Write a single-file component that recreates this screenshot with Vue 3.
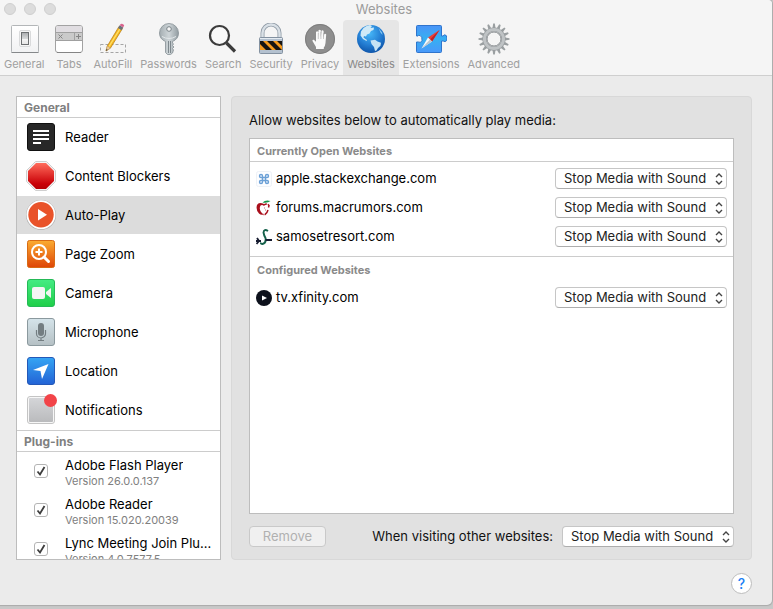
<template>
  <div class="desktop">
    <main class="window">
      <header class="titlebar">
        <div class="title-row">
          <div class="lights">
            <span v-for="n in 3" :key="n" class="light"></span>
          </div>
          <h1 class="title">Websites</h1>
        </div>

        <nav class="toolbar">
          <button
            v-for="tab in tabs"
            :key="tab"
            type="button"
            class="tab"
            :class="{ active: tab === activeTab }"
            @click="activeTab = tab"
          >
            <svg class="tab-icon" width="32" height="32" viewBox="0 0 32 32">
              <g v-if="tab === 'General'">
                <defs>
                  <linearGradient id="plate" x1="0" y1="0" x2="0" y2="1">
                    <stop offset="0" stop-color="#ffffff" />
                    <stop offset="1" stop-color="#f1f2f3" />
                  </linearGradient>
                  <linearGradient id="switch" x1="0" y1="0" x2="0" y2="1">
                    <stop offset="0" stop-color="#a8abad" />
                    <stop offset="0.5" stop-color="#d5d7d8" />
                    <stop offset="0.55" stop-color="#f5f5f5" />
                    <stop offset="1" stop-color="#e4e4e4" />
                  </linearGradient>
                </defs>
                <rect x="3.5" y="2.5" width="27" height="27" rx="1" fill="url(#plate)" stroke="#b3b6b8" />
                <path d="M3.5 29.5h27" stroke="#85888a" />
                <rect x="11.5" y="7.5" width="11" height="16" rx="1.5" fill="#f6f6f6" stroke="#d9dadb" />
                <rect x="13.5" y="9.5" width="7" height="12" fill="url(#switch)" stroke="#6d7072" />
              </g>
              <g v-else-if="tab === 'Tabs'">
                <rect x="2.5" y="2.5" width="27" height="27" rx="2.5" fill="#fff" stroke="#a2a2a2" />
                <path d="M3 9V5q0-2 2-2h22q2 0 2 2v4z" fill="#e0dde1" />
                <path d="M3 9h26v8H3z" fill="#cacaca" />
                <path d="M3 9.5h26M3 17.5h26M21.5 9v8" stroke="#a0a0a0" fill="none" />
                <path d="M5.5 11.5l4 4m0-4l-4 4M25.5 11v5M23 13.5h5" stroke="#858585" fill="none" />
                <path d="M4 29.5h24" stroke="#858585" />
              </g>
              <g v-else-if="tab === 'AutoFill'">
                <rect x="3.5" y="21.5" width="25" height="8" fill="none" stroke="#a5a5a5" stroke-dasharray="3 2" />
                <path d="M9 28l1.3-5L22 3.5l3.5 2L13.5 25z" fill="#f5b81e" stroke="#b57913" stroke-width="0.7" />
                <path d="M12 23.5L23.5 5" stroke="#ffe06b" stroke-width="1.3" />
                <path d="M9 28l1.3-5 3.2 2z" fill="#edcf9c" stroke="#b79463" stroke-width="0.5" />
                <path d="M9 28l.5-2 1.2.7z" fill="#333" />
                <path d="M21 5l1.7-2.7 3.5 2.2-1.7 2.7z" fill="#69727b" />
                <path d="M22.7 2.3l1-1.3q2-1 3.5 1.2l-1 2.3z" fill="#d9648e" />
              </g>
              <g v-else-if="tab === 'Passwords'">
                <defs>
                  <linearGradient id="key" x1="0" y1="0" x2="1" y2="0">
                    <stop offset="0" stop-color="#a4adb1" />
                    <stop offset="0.5" stop-color="#ced5d8" />
                    <stop offset="1" stop-color="#929ca1" />
                  </linearGradient>
                </defs>
                <path d="M12.5 18.5Q6.5 16 6.5 10a9.5 9.5 0 0 1 19 0q0 6-6 8.500V20l1 1-1 1.5 1.5 1.5-1.5 1.5 1 1.5-1 3-2 1.5h-3l-2-2z" fill="url(#key)" stroke="#858f94" stroke-width="0.8" />
                <circle cx="16" cy="6" r="2.3" fill="#f7f7f7" stroke="#788287" />
                <path d="M15.5 18v12M17.5 18v12" stroke="#768086" stroke-width="0.9" />
                <path d="M9 13.5q7 4 14 0" fill="none" stroke="#e2e7e9" />
              </g>
              <g v-else-if="tab === 'Search'" fill="none" stroke="#3c3c3c">
                <circle cx="12.5" cy="12.5" r="9.5" stroke-width="2.2" fill="#f9f9f9" />
                <path d="M19.5 20l8.5 8.5" stroke-width="3.2" />
              </g>
              <g v-else-if="tab === 'Security'">
                <path d="M7.5 16V10a8.5 8.5 0 0 1 17 0v6" fill="none" stroke="#929da8" stroke-width="4" />
                <path d="M7.5 16V10a8.5 8.5 0 0 1 17 0v6" fill="none" stroke="#d9e0e6" stroke-width="2.4" />
                <rect x="4.5" y="14.5" width="23" height="16" rx="1" fill="#b4c1cf" stroke="#8391a0" />
                <path d="M5 18h22v9H5z" fill="#f79b1d" />
                <path d="M5 18h3l9 9h-6l-6-6zM12 18h6l9 9h-6zM22 18h5v5z" fill="#171512" />
                <path d="M5 15.5h22" stroke="#e4ebf1" />
              </g>
              <g v-else-if="tab === 'Privacy'">
                <circle cx="16" cy="16" r="15" fill="#8e8e8e" />
                <circle cx="16" cy="16" r="14.5" fill="none" stroke="#7f7f7f" />
                <path d="M12 24L8.5 18q-.3-1.5 1.3-1.2l2.2 2V9q1.2-1.4 2.2 0V14l.3-6.7q1.2-1.3 2.3 0V14l.7-6.2q1.2-1 2.1.3V15l.7-4q1.2-.9 1.9.4L21.500 20q-.3 3-1.7 4.5V26H12z" fill="#fafafa" />
                <path d="M14.3 10v6M16.9 9v7M19.5 10v6" stroke="#aaa" stroke-width="0.6" />
              </g>
              <g v-else-if="tab === 'Websites'">
                <defs>
                  <radialGradient id="ocean" cx="0.45" cy="0.3" r="0.75">
                    <stop offset="0" stop-color="#47b7f8" />
                    <stop offset="0.55" stop-color="#247ed3" />
                    <stop offset="1" stop-color="#0b4fa3" />
                  </radialGradient>
                </defs>
                <circle cx="16" cy="16" r="14" fill="url(#ocean)" />
                <path d="M8.5 5q3-2.5 6.5-3l2 1-1.5 2 3.5-.5-.5 2.5-2.5 1-1.5 2.5-2.5 1-1 2-2-.5-.5 1.5 2 1.5 1.5 1-.5 1-3.5-2-2.5-3.5.5-4z" fill="#cfe9f7" />
                <path d="M15.5 17.5l4.5-.7 2.5 1.7 3.5 1.2-.5 3-2.5 2.3-1.5 2.5-1.5.5-1-4-2.5-3z" fill="#c6e3f4" />
                <path d="M23.5 5l3.5 4.5.5 2.5-2-2.5z" fill="#8ccbf0" />
              </g>
              <g v-else-if="tab === 'Extensions'">
                <defs>
                  <linearGradient id="puzzle" x1="0" y1="0" x2="0" y2="1">
                    <stop offset="0" stop-color="#4a94f8" />
                    <stop offset="0.5" stop-color="#35b0f2" />
                    <stop offset="1" stop-color="#4a98fa" />
                  </linearGradient>
                </defs>
                <path d="M1.5 3.5q0-1 1-1h23q1 0 1 1V13h1.5q1.5-2 3.2-.5 1.5 2.5.5 5-1.5 2-3.5.5H26.5v10.5q0 1-1 1h-23q-1 0-1-1V19H3q3 1.5 4-1.5.5-4-2-5-2-.5-2 .5H1.5z" fill="url(#puzzle)" stroke="#2f74cc" stroke-linejoin="round" />
                <path d="M24.5 7L13 14.5l4 4z" fill="#e94038" />
                <path d="M24.5 7L17 18.5l-2-2z" fill="#bd2426" />
                <path d="M13 14.5l4 4L6.5 25.5z" fill="#f7fafb" />
                <path d="M15 16.5l2 2L6.5 25.5z" fill="#b9c5cd" />
              </g>
              <g v-else>
                <g fill="#9a9fa1">
                  <path
                    v-for="n in 16"
                    :key="n"
                    d="M15.2 .5h1.6l1 6h-3.6z"
                    :transform="`rotate(${n * 22.5} 16 16)`"
                  />
                </g>
                <circle cx="16" cy="16" r="9.5" fill="none" stroke="#959a9d" stroke-width="4.2" />
                <circle cx="16" cy="16" r="9.5" fill="none" stroke="#bfc3c5" stroke-width="3" />
                <circle cx="16" cy="16" r="7" fill="#f5f5f5" stroke="#8a8f92" />
              </g>
            </svg>
            <span>{{ tab }}</span>
          </button>
        </nav>
      </header>

      <div class="content">
        <aside class="sidebar">
          <h2 class="side-heading">General</h2>
          <ul>
            <li
              v-for="item in sections"
              :key="item"
              class="side-row"
              :class="{ selected: item === activeSection }"
              @click="activeSection = item"
            >
              <svg class="side-icon" width="32" height="32" viewBox="0 0 32 32">
                <g v-if="item === 'Reader'">
                  <rect x="2.5" y="2.5" width="27" height="27" rx="2.5" fill="#282828" stroke="#111" />
                  <path d="M8 10h16M8 14h16M8 18h16M8 22h8" stroke="#fff" stroke-width="2" />
                </g>
                <g v-else-if="item === 'Content Blockers'">
                  <defs>
                    <linearGradient id="stop" x1="0" y1="0" x2="0" y2="1">
                      <stop offset="0" stop-color="#ff6c5c" />
                      <stop offset="0.8" stop-color="#c90007" />
                      <stop offset="1" stop-color="#b60004" />
                    </linearGradient>
                  </defs>
                  <path d="M10.5 1.5h11l9 9v11l-9 9h-11l-9-9v-11z" fill="#f4f4f4" stroke="#cfcfcf" />
                  <path d="M11 3h10l8 8v10l-8 8H11l-8-8V11z" fill="url(#stop)" />
                </g>
                <g v-else-if="item === 'Auto-Play'">
                  <circle cx="16" cy="16" r="15" fill="#a9a9a9" />
                  <circle cx="16" cy="15.7" r="14.5" fill="#fff" />
                  <circle cx="16" cy="15.7" r="12.7" fill="#e9532a" />
                  <path d="M13 10l9 5.7-9 5.8z" fill="#fff" />
                </g>
                <g v-else-if="item === 'Page Zoom'">
                  <defs>
                    <linearGradient id="zoom" x1="0" y1="0" x2="0" y2="1">
                      <stop offset="0" stop-color="#fbac31" />
                      <stop offset="1" stop-color="#de4507" />
                    </linearGradient>
                  </defs>
                  <rect x="2.5" y="2.5" width="27" height="27" rx="2" fill="url(#zoom)" stroke="#d86b14" />
                  <g fill="none" stroke="#fff" stroke-width="2">
                    <circle cx="14" cy="14" r="7" />
                    <path d="M19 19l4.5 4.5" stroke-width="3" stroke-linecap="round" />
                    <path d="M14 10.5v7M10.5 14h7" />
                  </g>
                </g>
                <g v-else-if="item === 'Camera'">
                  <defs>
                    <linearGradient id="camera" x1="0" y1="0" x2="0" y2="1">
                      <stop offset="0" stop-color="#45ec84" />
                      <stop offset="1" stop-color="#1fce48" />
                    </linearGradient>
                  </defs>
                  <rect x="2.5" y="2.5" width="27" height="27" rx="2.5" fill="url(#camera)" stroke="#25b957" />
                  <rect x="7" y="10" width="13" height="12" rx="2" fill="#f5f5f5" />
                  <path d="M21 15l5-4v10l-5-4z" fill="#f0f5f0" />
                </g>
                <g v-else-if="item === 'Microphone'">
                  <defs>
                    <linearGradient id="mic" x1="0" y1="0" x2="0" y2="1">
                      <stop offset="0" stop-color="#d5e4ea" />
                      <stop offset="1" stop-color="#b5c0c4" />
                    </linearGradient>
                  </defs>
                  <rect x="2.5" y="2.5" width="27" height="27" rx="2.5" fill="url(#mic)" stroke="#8b999e" />
                  <rect x="13" y="7" width="6" height="13" rx="3" fill="#737d81" />
                  <path d="M11.5 14v3.5a4.5 4.5 0 0 0 9 0V14M16 22v2.5M13 24.5h6" fill="none" stroke="#737d81" stroke-width="1.2" />
                </g>
                <g v-else-if="item === 'Location'">
                  <defs>
                    <linearGradient id="location" x1="0" y1="0" x2="0" y2="1">
                      <stop offset="0" stop-color="#35a5f4" />
                      <stop offset="1" stop-color="#2363d5" />
                    </linearGradient>
                  </defs>
                  <rect x="2.5" y="2.5" width="27" height="27" rx="2.5" fill="url(#location)" stroke="#2458b7" />
                  <path d="M23.5 9L17 24l-1.5-8L8 15z" fill="#fff" />
                </g>
                <g v-else>
                  <defs>
                    <linearGradient id="note" x1="0" y1="0" x2="0" y2="1">
                      <stop offset="0" stop-color="#d4d5d8" />
                      <stop offset="1" stop-color="#babbbd" />
                    </linearGradient>
                  </defs>
                  <rect x="2.5" y="2.5" width="27" height="27" rx="2.5" fill="#f7f7f7" stroke="#c4c4c4" />
                  <rect x="4" y="4" width="24" height="24" rx="1" fill="url(#note)" />
                  <circle cx="25.5" cy="6.5" r="6.5" fill="#f24449" />
                </g>
              </svg>
              <span>{{ item }}</span>
            </li>
          </ul>

          <h2 class="side-heading divided">Plug-ins</h2>
          <ul>
            <li v-for="plugin in plugins" :key="plugin.name">
              <label class="plugin-row">
                <input v-model="plugin.enabled" type="checkbox" class="check" />
                <svg v-if="plugin.enabled" class="tick" width="14" height="14" viewBox="0 0 14 14">
                  <path d="M3.5 7.5l2.5 3 4.5-7.5" fill="none" stroke="#3d3d3d" stroke-width="1.8" />
                </svg>
                <span class="plugin-text">
                  <span class="plugin-name">{{ plugin.name }}</span>
                  <span class="plugin-version">Version {{ plugin.version }}</span>
                </span>
              </label>
            </li>
          </ul>
        </aside>

        <section class="panel">
          <p class="intro">Allow websites below to automatically play media:</p>

          <div class="site-list">
            <div v-for="group in groups" :key="group.title" class="group">
              <h3 class="group-heading">{{ group.title }}</h3>
              <div v-for="site in group.sites" :key="site.host" class="site-row">
                <svg width="16" height="16" viewBox="0 0 16 16">
                  <g v-if="site.icon === 'command'">
                    <rect x="0.5" y="0.5" width="15" height="15" rx="2" fill="#fcfdff" stroke="#edf1f6" />
                    <path d="M6.5 6.5h3v3h-3zM6.5 6.5H5A1.5 1.5 0 1 1 6.5 5zM9.5 6.5V5A1.5 1.5 0 1 1 11 6.5zM6.5 9.5V11A1.5 1.5 0 1 1 5 9.5zM9.5 9.5H11A1.5 1.5 0 1 1 9.5 11z" fill="none" stroke="#6ba0d6" stroke-width="1.4" />
                  </g>
                  <g v-else-if="site.icon === 'apple'">
                    <path d="M7 4Q3 1.5 1 5q-1.5 5 2 8.5 2 2 4.5 1L5 12Q2.5 8 5 5z" fill="#a90f1c" />
                    <path d="M5 4.5q2-.5 3 .5 3-2 5 .5l-.5 2M12 10q-1 3.5-3 4.5H7" fill="none" stroke="#a90f1c" stroke-width="1.5" stroke-dasharray="6 1" />
                    <path d="M6.5 2.5q3-3 8-1.5-3 2.5-8 1.5z" fill="#149447" />
                    <path d="M8 8h1M9 10h1" stroke="#c9666e" />
                  </g>
                  <g v-else-if="site.icon === 'swirl'" fill="none">
                    <path d="M12 2Q8-.5 7.5 3.5q.5 3 2 5.5 1 5-3 6-2 0-1.500-1.5" stroke="#15614b" stroke-width="1.9" />
                    <path d="M0 12h5M9.5 11H16M1 9l2 3-2.5 3" stroke="#171c31" stroke-width="1.8" />
                  </g>
                  <g v-else>
                    <circle cx="8" cy="8" r="8" fill="#0d111c" />
                    <path d="M6 5.5l5 2.5-5 2.5z" fill="#fff" />
                  </g>
                </svg>
                <label :for="site.host" class="host">{{ site.host }}</label>
                <span class="popup">
                  <select :id="site.host" v-model="site.policy">
                    <option v-for="option in policies" :key="option">{{ option }}</option>
                  </select>
                  <svg class="arrows" width="8" height="12" viewBox="0 0 8 12">
                    <path d="M1 4l3-3 3 3M1 8l3 3 3-3" fill="none" stroke="#444" stroke-width="1.4" />
                  </svg>
                </span>
              </div>
            </div>
          </div>

          <div class="actions">
            <button type="button" class="remove" disabled>Remove</button>
            <label for="other-sites" class="other-label">When visiting other websites:</label>
            <span class="popup">
              <select id="other-sites" v-model="defaultPolicy">
                <option v-for="option in policies" :key="option">{{ option }}</option>
              </select>
              <svg class="arrows" width="8" height="12" viewBox="0 0 8 12">
                <path d="M1 4l3-3 3 3M1 8l3 3 3-3" fill="none" stroke="#444" stroke-width="1.4" />
              </svg>
            </span>
          </div>
        </section>
      </div>

      <footer class="footer">
        <button type="button" class="help">?</button>
      </footer>
    </main>
  </div>
</template>

<script setup>
import { ref } from 'vue'

const tabs = [
  'General', 'Tabs', 'AutoFill', 'Passwords', 'Search',
  'Security', 'Privacy', 'Websites', 'Extensions', 'Advanced'
]
const activeTab = ref('Websites')

const sections = [
  'Reader', 'Content Blockers', 'Auto-Play', 'Page Zoom',
  'Camera', 'Microphone', 'Location', 'Notifications'
]
const activeSection = ref('Auto-Play')

const plugins = ref([
  { name: 'Adobe Flash Player', version: '26.0.0.137', enabled: true },
  { name: 'Adobe Reader', version: '15.020.20039', enabled: true },
  { name: 'Lync Meeting Join Plu...', version: '4.0.7577.5', enabled: true }
])

const policies = ['Stop Media with Sound', 'Allow All Auto-Play', 'Never Auto-Play']
const defaultPolicy = ref(policies[0])

const groups = ref([
  {
    title: 'Currently Open Websites',
    sites: [
      { host: 'apple.stackexchange.com', icon: 'command', policy: policies[0] },
      { host: 'forums.macrumors.com', icon: 'apple', policy: policies[0] },
      { host: 'samosetresort.com', icon: 'swirl', policy: policies[0] }
    ]
  },
  {
    title: 'Configured Websites',
    sites: [{ host: 'tv.xfinity.com', icon: 'play', policy: policies[0] }]
  }
])
</script>

<style>
body {
  margin: 0;
}
</style>

<style scoped>
* {
  box-sizing: border-box;
}

h1, h2, h3, p, ul {
  margin: 0;
  padding: 0;
  list-style: none;
}

button, select, input {
  margin: 0;
  font: inherit;
}

.desktop {
  height: 100vh;
  padding: 0 1px 4px 0;
  background: #c8c8c8;
  font-family: Inter, "Liberation Sans", sans-serif;
  font-size: 13px;
  line-height: 16px;
  color: #111;
}

.window {
  display: flex;
  flex-direction: column;
  height: 100%;
  background: #ebebeb;
  border-radius: 0 4px 5px 0;
  box-shadow: 0 0 1px 1px #aaa;
}

.titlebar {
  background: #f5f5f5;
  border-bottom: 1px solid #cfcfcf;
  border-radius: 0 4px 0 0;
  color: #9c9c9c;
}

.title-row {
  display: grid;
  grid-template-columns: 60px 1fr 64px;
  align-items: start;
  height: 20px;
}

.lights {
  display: flex;
  gap: 8px;
  padding: 3px 0 0 4px;
}

.light {
  width: 12px;
  height: 12px;
  border: 1px solid #cfcfcf;
  border-radius: 50%;
  background: #dcdcdc;
}

.title {
  font-size: 13px;
  font-weight: 400;
  line-height: 18px;
  text-align: center;
}

.toolbar {
  display: flex;
}

.tab {
  display: flex;
  flex-direction: column;
  align-items: center;
  gap: 1px;
  min-width: 41px;
  height: 55px;
  padding: 3px 4px;
  border: 0;
  border-radius: 4px 4px 0 0;
  background: none;
  color: #a0a0a0;
  font-size: 11px;
  line-height: 16px;
}

.tab.active {
  background: #e6e6e6;
  color: #8a8a8a;
}

.content {
  display: grid;
  grid-template-columns: 205px minmax(0, 1fr);
  grid-template-rows: minmax(0, 1fr);
  gap: 10px;
  flex: 1;
  min-height: 0;
  padding: 20px 20px 0 16px;
}

.sidebar {
  overflow: hidden;
  border: 1px solid #bdbdbd;
  background: #fff;
  color: #000;
}

.side-heading {
  height: 21px;
  padding-left: 7px;
  border-bottom: 1px solid #ccc;
  color: #808080;
  font-size: 12px;
  font-weight: 700;
  line-height: 21px;
}

.side-heading.divided {
  height: 22px;
  border-top: 1px solid #ccc;
}

.side-row {
  display: flex;
  align-items: center;
  gap: 8px;
  height: 38px;
  margin-bottom: 1px;
  padding-left: 8px;
}

.side-row.selected {
  background: #dcdcdc;
}

.plugin-row {
  display: flex;
  align-items: center;
  position: relative;
  gap: 17px;
  height: 38px;
  margin-bottom: 1px;
  padding: 0 4px 0 17px;
}

.check {
  flex: none;
  width: 14px;
  height: 14px;
  appearance: none;
  border: 1px solid #b4b4b4;
  border-radius: 3px;
  background: #fff;
}

.tick {
  position: absolute;
  left: 17px;
  pointer-events: none;
}

.plugin-text {
  display: flex;
  flex-direction: column;
  min-width: 0;
  padding-top: 4px;
}

.plugin-name {
  overflow: hidden;
  text-overflow: ellipsis;
  white-space: nowrap;
}

.plugin-version {
  color: #808080;
  font-size: 11px;
  line-height: 16px;
}

.panel {
  display: flex;
  flex-direction: column;
  padding: 15px 17px 12px;
  border: 1px solid #d8d8d8;
  border-radius: 4px;
  background: #e1e1e1;
}

.intro {
  padding-bottom: 10px;
}

.site-list {
  flex: 1;
  min-height: 0;
  border: 1px solid #bdbdbd;
  background: #fff;
}

.group-heading {
  height: 26px;
  padding-left: 7px;
  color: #8a8a8a;
  font-size: 11px;
  font-weight: 700;
  line-height: 26px;
}

.group:first-child {
  padding-bottom: 5px;
  border-bottom: 1px solid #ccc;
}

.group:first-child .group-heading {
  height: 23px;
  margin-bottom: 2px;
  border-bottom: 1px solid #ccc;
  line-height: 24px;
}

.site-row {
  display: flex;
  align-items: center;
  gap: 4px;
  height: 29px;
  padding: 0 6px;
}

.host {
  flex: 1;
  color: #000;
  line-height: 15px;
}

.popup {
  display: flex;
  align-items: center;
  position: relative;
}

.popup select {
  width: 172px;
  height: 21px;
  padding: 0 8px 1px;
  appearance: none;
  border: 1px solid #c6c6c6;
  border-bottom-color: #adadad;
  border-radius: 4px;
  background: #fff;
  color: #222;
}

.arrows {
  position: absolute;
  right: 4px;
  pointer-events: none;
}

.actions {
  display: flex;
  align-items: center;
  padding-top: 12px;
}

.remove {
  width: 77px;
  height: 21px;
  padding: 0 0 1px;
  border: 1px solid #c9c9c9;
  border-radius: 4px;
  background: #f0f0f0;
  color: #b0b0b0;
}

.other-label {
  margin-left: auto;
  padding-right: 9px;
  line-height: 15px;
}

.footer {
  display: flex;
  justify-content: flex-end;
  height: 45px;
  padding: 13px 20px 0 0;
}

.help {
  width: 21px;
  height: 21px;
  padding: 0;
  border: 1px solid #bdbdbd;
  border-radius: 50%;
  background: #fff;
  color: #1a7ff5;
  font-size: 14px;
  font-weight: 500;
  line-height: 16px;
}
</style>
